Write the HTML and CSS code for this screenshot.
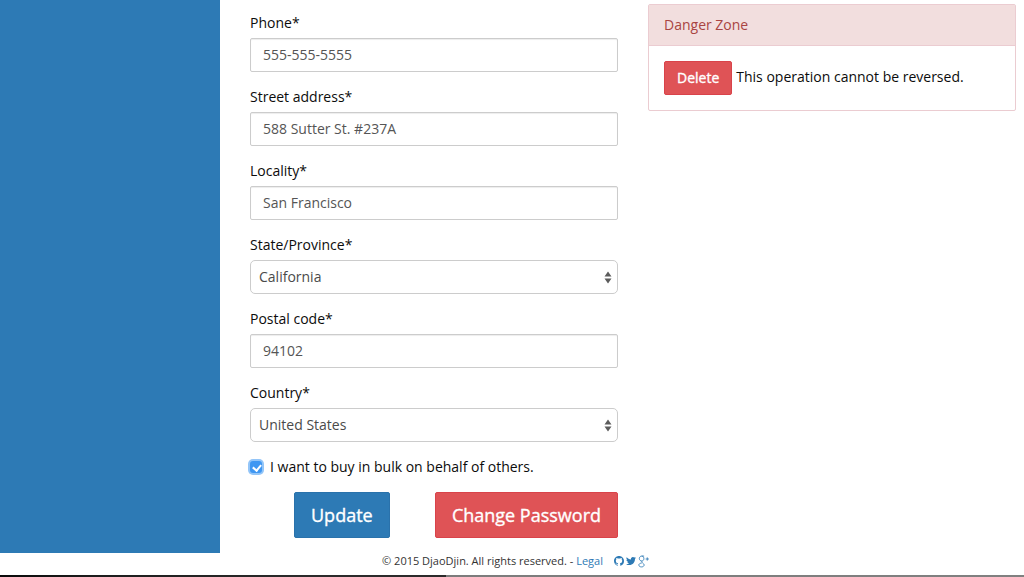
FILE: index.html
```html
<!DOCTYPE html>
<html lang="en">
<head>
<meta charset="utf-8">
<title>Contact - DjaoDjin</title>
<link rel="stylesheet" href="styles.css">
</head>
<body>
<div class="page">
  <div class="top">
    <aside class="sidebar"></aside>
    <main class="content">
      <form class="form">
        <div class="group">
          <label class="label" for="phone">Phone*</label>
          <input class="control" id="phone" type="text" value="555-555-5555">
        </div>
        <div class="group">
          <label class="label" for="street">Street address*</label>
          <input class="control" id="street" type="text" value="588 Sutter St. #237A">
        </div>
        <div class="group">
          <label class="label" for="locality">Locality*</label>
          <input class="control" id="locality" type="text" value="San Francisco">
        </div>
        <div class="group">
          <label class="label" for="state">State/Province*</label>
          <div class="select-wrap">
            <select class="control select" id="state"><option>California</option></select>
            <svg class="arrows" width="8" height="13" viewBox="0 0 8 13"><path d="M4 0.500 7.500 5.500H0.500Z M0.500 7.500H7.500L4 12.500Z"/></svg>
          </div>
        </div>
        <div class="group">
          <label class="label" for="postal">Postal code*</label>
          <input class="control" id="postal" type="text" value="94102">
        </div>
        <div class="group">
          <label class="label" for="country">Country*</label>
          <div class="select-wrap">
            <select class="control select" id="country"><option>United States</option></select>
            <svg class="arrows" width="8" height="13" viewBox="0 0 8 13"><path d="M4 0.500 7.500 5.500H0.500Z M0.500 7.500H7.500L4 12.500Z"/></svg>
          </div>
        </div>
        <label class="check">
          <input class="check-box" type="checkbox" checked>
          <span>I want to buy in bulk on behalf of others.</span>
        </label>
        <div class="actions">
          <button class="btn btn-lg btn-primary" type="button">Update</button>
          <button class="btn btn-lg btn-danger" type="button">Change Password</button>
        </div>
      </form>
      <section class="panel">
        <div class="panel-heading">Danger Zone</div>
        <div class="panel-body">
          <button class="btn btn-danger btn-md" type="button">Delete</button>
          <span class="panel-note">This operation cannot be reversed.</span>
        </div>
      </section>
    </main>
  </div>
  <footer class="footer">
    <span>© 2015 DjaoDjin. All rights reserved. - <a class="link" href="#">Legal</a></span>
    <span class="social">
      <svg class="icon" width="10" height="10" viewBox="0 0 16 16"><path d="M8 0C3.58 0 0 3.58 0 8c0 3.54 2.29 6.53 5.47 7.59.4.07.55-.17.55-.38 0-.19-.01-.82-.01-1.49-2.01.37-2.53-.49-2.69-.94-.09-.23-.48-.94-.82-1.13-.28-.15-.68-.52-.01-.53.63-.01 1.08.58 1.23.82.72 1.21 1.87.87 2.33.66.07-.52.28-.87.51-1.07-1.78-.2-3.64-.89-3.64-3.95 0-.87.31-1.59.82-2.15-.08-.2-.36-1.02.08-2.12 0 0 .67-.21 2.2.82.64-.18 1.32-.27 2-.27.68 0 1.36.09 2 .27 1.53-1.04 2.2-.82 2.2-.82.44 1.1.16 1.92.08 2.12.51.56.82 1.27.82 2.15 0 3.07-1.87 3.75-3.65 3.95.29.25.54.73.54 1.48 0 1.07-.01 1.93-.01 2.2 0 .21.15.46.55.38A8.013 8.013 0 0016 8c0-4.42-3.58-8-8-8z"/></svg>
      <svg class="icon" width="10" height="10" viewBox="0 0 24 24"><path d="M23.953 4.57a10 10 0 01-2.825.775 4.958 4.958 0 002.163-2.723c-.951.555-2.005.959-3.127 1.184a4.92 4.92 0 00-8.384 4.482C7.69 8.095 4.067 6.13 1.64 3.162a4.822 4.822 0 00-.666 2.475c0 1.71.87 3.213 2.188 4.096a4.904 4.904 0 01-2.228-.616v.06a4.923 4.923 0 003.946 4.827 4.996 4.996 0 01-2.212.085 4.936 4.936 0 004.604 3.417 9.867 9.867 0 01-6.102 2.105c-.39 0-.779-.023-1.17-.067a13.995 13.995 0 007.557 2.209c9.053 0 13.998-7.496 13.998-13.985 0-.21 0-.42-.015-.63A9.935 9.935 0 0024 4.59z"/></svg>
      <svg class="icon-stroke" width="12" height="13" viewBox="0 0 11 12"><path d="M5.600 1H3.400C1.900 1 1.200 2.300 1.200 3.300c0 1.300 1 2.200 2.200 2.200 1.300 0 2-1 2-2.100C5.400 2 4.400 1 3.400 1M3.700 5.600c-.6.6-.3 1.100.4 1.700.9.700 1.500 1.100 1.500 2 0 1-1.100 1.700-2.400 1.700S.7 10.300.7 9.300c0-1 1.100-1.800 2.600-1.800"/><path d="M8.500 2.200v3M7 3.700h3"/></svg>
    </span>
  </footer>
  <div class="strip"></div>
</div>
</body>
</html>
```
FILE: styles.css
```css
* { box-sizing: border-box; }
html, body { margin: 0; padding: 0; height: 100%; overflow: hidden; }
body {
  font-family: "Open Sans", "Liberation Sans", sans-serif;
  font-size: 14px;
  line-height: 20px;
  color: #0c0c0c;
  background: #fff;
}
.page { display: flex; flex-direction: column; height: 577px; }
.top { display: flex; height: 553px; flex: none; }
.sidebar { width: 220px; flex: none; background: #2d7ab5; }
.content { display: flex; flex: 1; gap: 30px; padding-left: 30px; padding-right: 8px; align-items: flex-start; }
.form { width: 368px; flex: none; padding-top: 13px; }
.group { margin-bottom: 15px; }
.label { display: block; margin-bottom: 5px; font-weight: 400; }
.control {
  display: block;
  width: 100%;
  height: 34px;
  padding: 4px 12px 6px;
  border: 1px solid #ccc;
  border-radius: 2px;
  background: #fff;
  color: #555;
  font: 14px/20px "Open Sans", "Liberation Sans", sans-serif;
  box-shadow: inset 0 1px 1px rgba(0,0,0,.075);
  outline: none;
}
.select-wrap { position: relative; }
.select { appearance: none; -webkit-appearance: none; padding: 6px 12px 6px 8px; border-radius: 5px; box-shadow: none; color: #4a4a4a; }
.arrows { position: absolute; right: 6px; top: 11px; fill: #5c5c5c; pointer-events: none; }
.check { display: flex; align-items: center; gap: 8px; height: 20px; }
.check-box {
  appearance: none;
  -webkit-appearance: none;
  position: relative;
  flex: none;
  width: 12px;
  height: 12px;
  margin: 0;
  background: #3f97f2;
  border-radius: 3px;
  box-shadow: 0 0 0 2px #93c5f8;
}
.check-box::after {
  content: "";
  position: absolute;
  left: 4px;
  top: 2px;
  width: 4px;
  height: 6px;
  border: solid #fff;
  border-width: 0 2px 2px 0;
  transform: rotate(40deg);
}
.actions { display: flex; justify-content: space-between; margin-top: 15px; padding-left: 44px; }
.btn {
  display: inline-block;
  border: 1px solid transparent;
  border-radius: 2px;
  color: #fff;
  font-family: "Open Sans", "Liberation Sans", sans-serif;
  font-weight: 400;
  -webkit-text-stroke: .35px #fff;
}
.btn-lg { height: 46px; padding: 0 16px; font-size: 18px; line-height: 24px; }
.btn-md { height: 34px; padding: 0 12px; font-size: 14px; line-height: 20px; }
.btn-primary { background: #2d7ab5; border-color: #2a72ab; }
.btn-danger { background: #df5356; border-color: #d9434a; }
.panel {
  width: 368px;
  flex: none;
  margin-top: 4px;
  border: 1px solid #ebccd1;
  border-radius: 2px;
  background: #fff;
}
.panel-heading {
  height: 41px;
  padding: 10px 15px;
  background: #f2dede;
  color: #a94442;
  border-bottom: 1px solid #ebccd1;
}
.panel-body { display: flex; align-items: flex-start; gap: 4px; padding: 15px; height: 64px; }
.panel-note { padding-top: 6px; }
.footer {
  flex: 1;
  display: flex;
  justify-content: center;
  align-items: flex-start;
  gap: 11px;
  padding-left: 8px;
  font-size: 11px;
  line-height: 16px;
  color: #333;
}
.link { color: #2d7ab5; text-decoration: none; }
.social { display: inline-flex; align-items: center; gap: 2px; height: 16px; }
.icon { fill: #2d7ab5; }
.icon-stroke { fill: none; stroke: #2d7ab5; stroke-width: .8; }
.strip { height: 2px; flex: none; background: linear-gradient(90deg, #0a0a0a 0, #1c1c1c 9%, #2b2b2b 30%, #2b2b2b 43.600%, #7c7c7c 43.600%, #808080 100%); }
```
